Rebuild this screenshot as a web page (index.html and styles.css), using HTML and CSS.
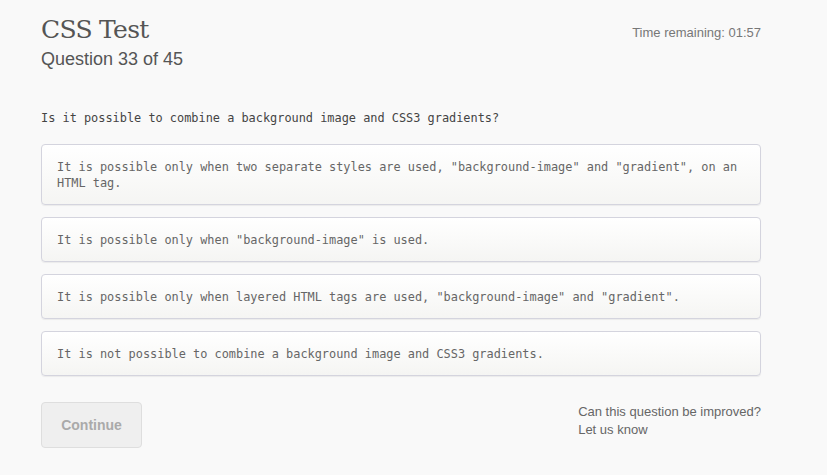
FILE: index.html
```html
<!DOCTYPE html>
<html>
<head>
<meta charset="utf-8">
<link rel="stylesheet" href="styles.css">
</head>
<body>
<div class="page">
  <header class="top">
    <div class="titles">
      <h1 class="title">CSS Test</h1>
      <div class="subtitle">Question 33 of 45</div>
    </div>
    <div class="timer">Time remaining: 01:57</div>
  </header>
  <p class="question">Is it possible to combine a background image and CSS3 gradients?</p>
  <div class="options">
    <div class="option">It is possible only when two separate styles are used, "background-image" and "gradient", on an HTML tag.</div>
    <div class="option">It is possible only when "background-image" is used.</div>
    <div class="option">It is possible only when layered HTML tags are used, "background-image" and "gradient".</div>
    <div class="option">It is not possible to combine a background image and CSS3 gradients.</div>
  </div>
  <footer class="bottom">
    <button class="continue">Continue</button>
    <div class="feedback">Can this question be improved?<br>Let us know</div>
  </footer>
</div>
</body>
</html>
```
FILE: styles.css
```css
html, body {
  margin: 0;
  padding: 0;
  background: #f9f9f9;
}
.page {
  width: 720px;
  margin-left: 41px;
  font-family: "Liberation Sans", Arial, sans-serif;
}
.top {
  display: flex;
  justify-content: space-between;
  align-items: flex-start;
  padding-top: 14px;
}
.title {
  margin: 0;
  font-family: "DejaVu Serif", "Liberation Serif", serif;
  font-weight: normal;
  font-size: 25px;
  line-height: 32px;
  color: #555;
  letter-spacing: -0.7px;
}
.subtitle {
  font-size: 18px;
  line-height: 22px;
  color: #555;
  margin-top: 2px;
}
.timer {
  font-size: 13px;
  color: #777;
  margin-top: 11px;
}
.question {
  margin: 40px 0 0;
  font-family: "DejaVu Sans Mono", "Liberation Mono", monospace;
  font-size: 11.9px;
  line-height: 16px;
  color: #444;
}
.options {
  display: flex;
  flex-direction: column;
  gap: 12px;
  margin-top: 18px;
}
.option {
  border: 1px solid #d4d4de;
  border-radius: 4px;
  background: linear-gradient(#ffffff, #f5f5f3);
  box-shadow: 0 1px 1px rgba(0,0,0,0.06);
  padding: 14px 15px 13px;
  font-family: "DejaVu Sans Mono", "Liberation Mono", monospace;
  font-size: 11.9px;
  line-height: 16px;
  color: #666;
}
.bottom {
  display: flex;
  justify-content: space-between;
  align-items: flex-start;
  margin-top: 26px;
}
.continue {
  width: 101px;
  height: 46px;
  background: #efefef;
  border: 1px solid #dedede;
  border-radius: 4px;
  font-family: "Liberation Sans", Arial, sans-serif;
  font-weight: bold;
  font-size: 14px;
  color: #aaa;
  padding: 0;
}
.feedback {
  font-size: 13px;
  line-height: 18px;
  color: #666;
  white-space: nowrap;
  margin-top: 1px;
}
```
